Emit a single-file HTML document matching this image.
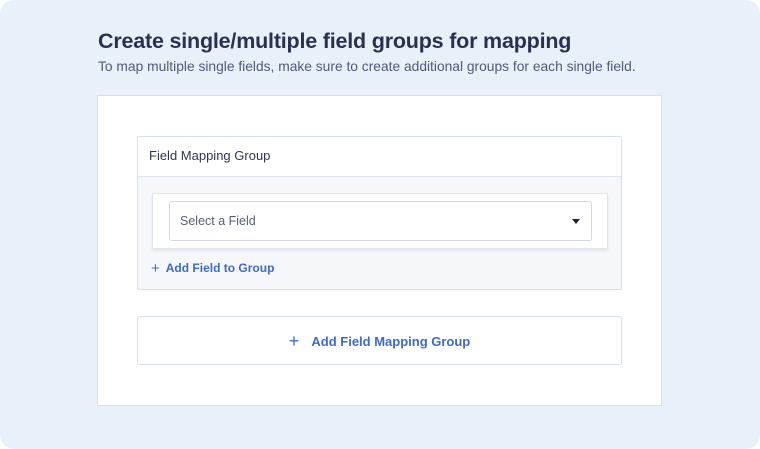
<!DOCTYPE html>
<html><head><style>
*{margin:0;padding:0;box-sizing:border-box}
html,body{width:760px;height:449px;background:#fff;overflow:hidden}
body{font-family:"Liberation Sans",Arial,sans-serif}
.bg{position:absolute;left:0;top:0;width:760px;height:449px;background:#e8f0fa;border-radius:14px}
.t{position:absolute;left:98px;top:29px;font-size:21.5px;font-weight:bold;color:#2a3150;letter-spacing:-0.2px}
.s{position:absolute;left:98px;top:59px;font-size:13.8px;color:#4f5a78}
.panel{position:absolute;left:97px;top:95px;width:565px;height:311px;background:#fff;border:1px solid #d6e0ec}
.grp{position:absolute;left:137px;top:136px;width:485px;height:154px;background:#f5f7fb;border:1px solid #d6e0ec;border-radius:2px}
.gh{height:40px;background:#fff;border-bottom:1px solid #dde5ef;padding:11px 0 0 11px;font-size:13px;color:#2e3656}
.card{position:absolute;left:14px;top:56px;width:456px;height:56px;background:#fff;border:1px solid #e0e6ef;box-shadow:0 2px 3px rgba(0,0,0,0.08)}
.sel{position:absolute;left:16px;top:7px;width:423px;height:40px;border:1px solid #cfd9e8;border-radius:3px;padding:12px 0 0 10px;font-size:12.5px;color:#555e78}
.car{position:absolute;right:11px;top:17px;width:0;height:0;border-left:4.5px solid transparent;border-right:4.5px solid transparent;border-top:5px solid #1d2440}
.lk{position:absolute;left:13px;top:124px;font-size:12px;font-weight:bold;color:#3f6ac4}
.btn{position:absolute;left:137px;top:316px;width:485px;height:49px;background:#fff;border:1px solid #d6e0ec;border-radius:3px;text-align:center;padding-top:16px;font-size:13px;font-weight:bold;color:#3f6ac4}
.p{font-weight:normal;margin-right:9px;font-size:18px;line-height:14px;position:relative;top:1px}
</style></head><body>
<div class="bg"></div>
<div class="t">Create single/multiple field groups for mapping</div>
<div class="s">To map multiple single fields, make sure to create additional groups for each single field.</div>
<div class="panel"></div>
<div class="grp">
<div class="gh">Field Mapping Group</div>
<div class="card"><div class="sel">Select a Field<div class="car"></div></div></div>
<div class="lk"><span class="p" style="font-size:15px;margin-right:6px">+</span>Add Field to Group</div>
</div>
<div class="btn"><span class="p">+</span> Add Field Mapping Group</div>
</body></html>
